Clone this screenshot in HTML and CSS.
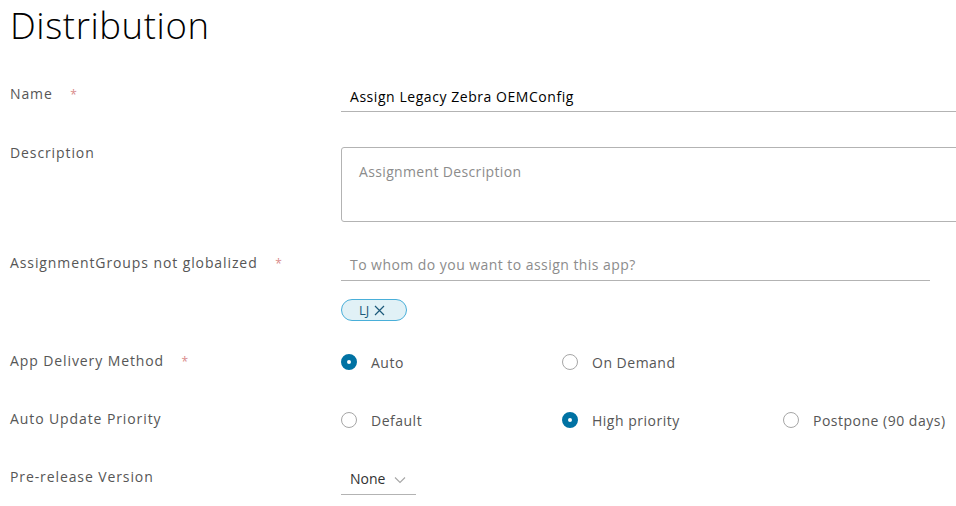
FILE: index.html
```html
<!DOCTYPE html>
<html>
<head>
<meta charset="utf-8">
<link rel="stylesheet" href="styles.css">
</head>
<body>
<div class="page">
  <h1 class="title">Distribution</h1>

  <div class="row row-name">
    <div class="label">Name <span class="req">*</span></div>
    <div class="control">
      <div class="input input-wide">Assign Legacy Zebra OEMConfig</div>
    </div>
  </div>

  <div class="row row-desc">
    <div class="label">Description</div>
    <div class="control">
      <div class="textarea"><span class="placeholder">Assignment Description</span></div>
    </div>
  </div>

  <div class="row row-groups">
    <div class="label">AssignmentGroups not globalized <span class="req">*</span></div>
    <div class="control">
      <div class="input input-groups"><span class="placeholder">To whom do you want to assign this app?</span></div>
      <div class="chips">
        <span class="chip">LJ
          <svg class="chip-x" width="11" height="11" viewBox="0 0 11 11"><path d="M1 1 L10 10 M10 1 L1 10" stroke="#1c5a7a" stroke-width="1.2" fill="none"/></svg>
        </span>
      </div>
    </div>
  </div>

  <div class="row row-delivery">
    <div class="label">App Delivery Method <span class="req">*</span></div>
    <div class="control radios">
      <div class="radio-item"><span class="radio checked"></span><span class="radio-text">Auto</span></div>
      <div class="radio-item"><span class="radio"></span><span class="radio-text">On Demand</span></div>
    </div>
  </div>

  <div class="row row-priority">
    <div class="label">Auto Update Priority</div>
    <div class="control radios">
      <div class="radio-item"><span class="radio"></span><span class="radio-text">Default</span></div>
      <div class="radio-item"><span class="radio checked"></span><span class="radio-text">High priority</span></div>
      <div class="radio-item"><span class="radio"></span><span class="radio-text">Postpone (90 days)</span></div>
    </div>
  </div>

  <div class="row row-prerelease">
    <div class="label">Pre-release Version</div>
    <div class="control">
      <div class="select">None
        <svg class="chev" width="12" height="8" viewBox="0 0 12 8"><path d="M1 1.5 L6 6.5 L11 1.5" stroke="#a6a6a6" stroke-width="1.1" fill="none"/></svg>
      </div>
    </div>
  </div>
</div>
</body>
</html>
```

FILE: styles.css
```css
html, body {
  margin: 0;
  padding: 0;
  background: #ffffff;
  overflow: hidden;
}
body {
  font-family: "Open Sans", "Liberation Sans", sans-serif;
  font-size: 14px;
  color: #565656;
}
.page {
  padding: 0 0 0 10px;
  width: 1100px;
}
.title {
  margin: 0;
  font-size: 36.5px;
  line-height: 50px;
  height: 50px;
  font-weight: 300;
  color: #000000;
  letter-spacing: 0.6px;
}
.row {
  display: grid;
  grid-template-columns: 331px 1fr;
  align-items: start;
}
.row-name { margin-top: 34px; }
.row-desc { margin-top: 31px; }
.row-groups { margin-top: 31px; }
.row-delivery { margin-top: 30px; }
.row-priority { margin-top: 37px; }
.row-prerelease { margin-top: 37px; }

.label {
  line-height: 20px;
  letter-spacing: 0.9px;
  color: #565656;
}
.req {
  color: #d98a8a;
  margin-left: 13px;
  font-size: 12px;
}
.placeholder { color: #8c8c8c; }

.input {
  box-sizing: border-box;
  height: 28px;
  padding: 3px 9px 4px 9px;
  line-height: 20px;
  border-bottom: 1px solid #b3b3b3;
  color: #000000;
  letter-spacing: 0.55px;
}
.input-wide { width: 660px; }
.input-groups { width: 589px; padding-top: 2px; padding-bottom: 5px; letter-spacing: 0.45px; }

.textarea {
  box-sizing: border-box;
  width: 660px;
  height: 75px;
  margin-top: 4px;
  border: 1px solid #b3b3b3;
  border-radius: 3px;
  padding: 14px 17px;
  line-height: 20px;
  letter-spacing: 0.35px;
}

.chips {
  margin-top: 18px;
  display: flex;
}
.chip {
  box-sizing: border-box;
  display: inline-flex;
  align-items: center;
  gap: 5px;
  height: 22px;
  width: 66px;
  padding-left: 17px;
  border: 1px solid #49afd9;
  border-radius: 11px;
  background: #e1f1f6;
  color: #1c5a7a;
  font-size: 13px;
  line-height: 20px;
}

.radios {
  display: flex;
  padding-top: 1px;
}
.radio-item {
  width: 221px;
  display: flex;
  align-items: center;
  height: 20px;
}
.radio {
  box-sizing: border-box;
  width: 16px;
  height: 16px;
  border-radius: 50%;
  border: 1px solid #a6a6a6;
  background: #fff;
  flex: none;
}
.radio.checked {
  border: 6px solid #0072a3;
}
.radio-text {
  margin-left: 14px;
  color: #565656;
  letter-spacing: 0.5px;
}

.select {
  box-sizing: border-box;
  display: inline-flex;
  align-items: center;
  width: 75px;
  height: 28px;
  padding: 2px 0 5px 9px;
  border-bottom: 1px solid #b3b3b3;
  color: #313131;
  line-height: 20px;
}
.chev {
  margin-left: 9px;
  margin-top: 1px;
}
```
